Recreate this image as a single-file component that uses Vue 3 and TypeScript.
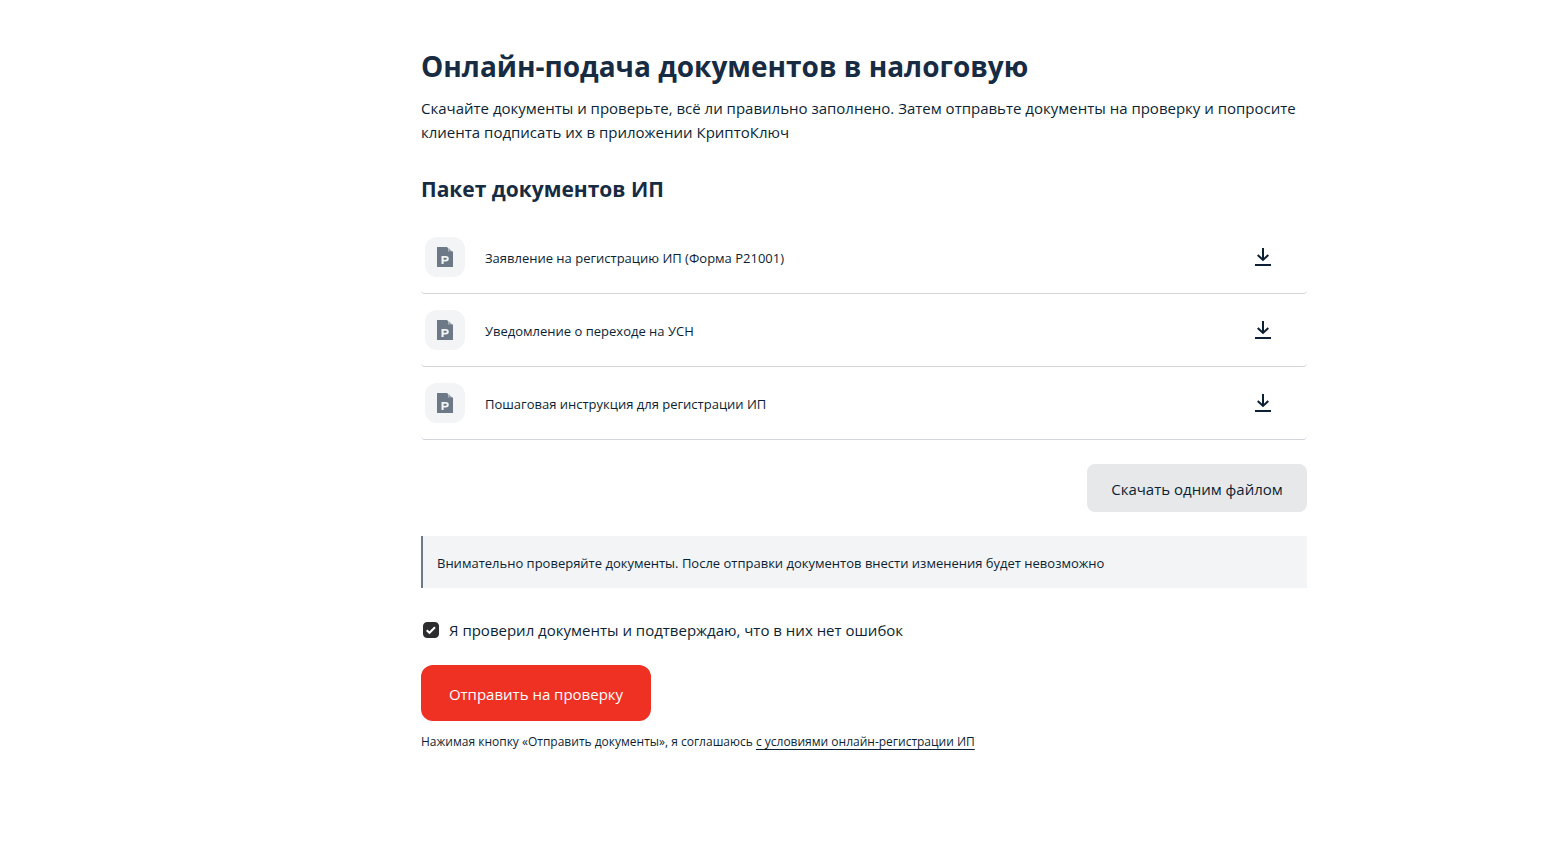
<script setup lang="ts">
import { ref } from 'vue'

interface PackageDocument {
  id: number
  title: string
}

const documents: PackageDocument[] = [
  { id: 1, title: 'Заявление на регистрацию ИП (Форма Р21001)' },
  { id: 2, title: 'Уведомление о переходе на УСН' },
  { id: 3, title: 'Пошаговая инструкция для регистрации ИП' },
]

const confirmed = ref(true)
</script>

<template>
  <div class="page">
    <main class="content">
      <h1>Онлайн-подача документов в налоговую</h1>
      <p class="lead">
        Скачайте документы и проверьте, всё ли правильно заполнено. Затем отправьте документы на проверку и попросите
        клиента подписать их в приложении КриптоКлюч
      </p>

      <h2>Пакет документов ИП</h2>
      <ul class="documents">
        <li v-for="doc in documents" :key="doc.id" class="document">
          <span class="file-badge">
            <svg width="24" height="24" viewBox="0 0 24 24" aria-hidden="true">
              <path fill="#6d7986" d="M4 2h10l1.500 1.500V6.500H20V22H4z" />
              <path fill="#6d7986" d="M16 3.500L19.500 7H16z" opacity=".7" />
              <path
                fill="#f3f4f6"
                fill-rule="evenodd"
                d="M8.500 11h4.300q3 0 3 2.700t-3 2.700H10.600V19H8.500zM10.600 12.700v2h2q1.200 0 1.200-1t-1.200-1z"
              />
            </svg>
          </span>
          <span class="document-title">{{ doc.title }}</span>
          <button type="button" class="download" :aria-label="'Скачать: ' + doc.title">
            <svg width="24" height="24" viewBox="0 0 24 24" aria-hidden="true" fill="none" stroke="#0b1f35" stroke-width="2">
              <path d="M12 3v12M6.700 10l5.300 5 5.300-5M4 20h16" />
            </svg>
          </button>
        </li>
      </ul>

      <div class="bundle">
        <button type="button" class="secondary">Скачать одним файлом</button>
      </div>

      <p class="notice">Внимательно проверяйте документы. После отправки документов внести изменения будет невозможно</p>

      <label class="confirm" for="confirm">
        <input id="confirm" v-model="confirmed" type="checkbox" />
        <svg class="tick" width="16" height="16" viewBox="0 0 16 16" aria-hidden="true">
          <path d="M3.700 8.200l2.800 2.600 5.500-5.600" fill="none" stroke="#fff" stroke-width="2" />
        </svg>
        <span>Я проверил документы и подтверждаю, что в них нет ошибок</span>
      </label>

      <button type="button" class="primary" :disabled="!confirmed">Отправить на проверку</button>

      <p class="terms">
        Нажимая кнопку «Отправить документы», я соглашаюсь <a href="#terms">с условиями онлайн-регистрации ИП</a>
      </p>
    </main>
  </div>
</template>

<style>
body {
  background: #fff;
}
</style>

<style scoped>
.page {
  display: grid;
  grid-template-columns: minmax(24px, 421fr) minmax(0, 886px) minmax(24px, 251fr);
  padding: 46px 0;
  color: #0b1f35;
  font-family: "Segoe UI", "Open Sans", "Noto Sans", sans-serif;
  font-size: 16px;
  line-height: 24px;
}

.content {
  grid-column: 2;
}

h1,
h2,
p,
ul {
  margin: 0;
  padding: 0;
}

h1 {
  font-size: 28px;
  line-height: 40px;
  font-weight: 700;
  color: #172b43;
}

.lead {
  margin-top: 10px;
  font-size: 15px;
}

h2 {
  margin-top: 29px;
  font-size: 21px;
  line-height: 32px;
  font-weight: 700;
  color: #172b43;
}

.documents {
  margin-top: 16px;
  list-style: none;
}

.document {
  display: flex;
  align-items: center;
  gap: 20px;
  padding: 16px 32px 16px 4px;
  border-bottom: 1px solid #d2d5d9;
  border-radius: 4px;
}

.file-badge {
  display: flex;
  align-items: center;
  justify-content: center;
  width: 40px;
  height: 40px;
  border-radius: 12px;
  background: #f3f4f6;
}

.document-title {
  flex: 1;
  padding-top: 2px;
  font-size: 13px;
}

.download {
  display: flex;
  padding: 0;
  border: 0;
  background: none;
  cursor: pointer;
}

.bundle {
  display: flex;
  justify-content: flex-end;
  margin-top: 24px;
}

.secondary,
.primary {
  border: 0;
  font-family: inherit;
  font-size: 15px;
  line-height: 24px;
  cursor: pointer;
}

.secondary {
  min-width: 220px;
  padding: 13px 0 11px;
  border-radius: 8px;
  background: #e6e8ea;
  color: #0b1f35;
}

.notice {
  margin-top: 24px;
  padding: 15px 14px 13px;
  border-left: 2px solid #6d7986;
  background: #f3f4f6;
  font-size: 13px;
}

.confirm {
  display: grid;
  grid-template-columns: 16px 1fr;
  align-items: center;
  column-gap: 10px;
  margin-top: 30px;
  padding-left: 2px;
  font-size: 15px;
}

.confirm input {
  appearance: none;
  grid-area: 1 / 1;
  width: 16px;
  height: 16px;
  margin: 0;
  border: 1px solid #2d2d30;
  border-radius: 4px;
  background: #fff;
}

.confirm input:checked {
  background: #2d2d30;
}

.tick {
  grid-area: 1 / 1;
  pointer-events: none;
}

.confirm span {
  grid-area: 1 / 2;
}

.primary {
  display: block;
  min-width: 230px;
  margin-top: 23px;
  padding: 17px 0 15px;
  border-radius: 12px;
  background: #ef3124;
  color: #fff;
}

.terms {
  margin-top: 12px;
  font-size: 12px;
  line-height: 18px;
}

.terms a {
  color: inherit;
  text-decoration: underline;
  text-underline-offset: 3px;
}
</style>
